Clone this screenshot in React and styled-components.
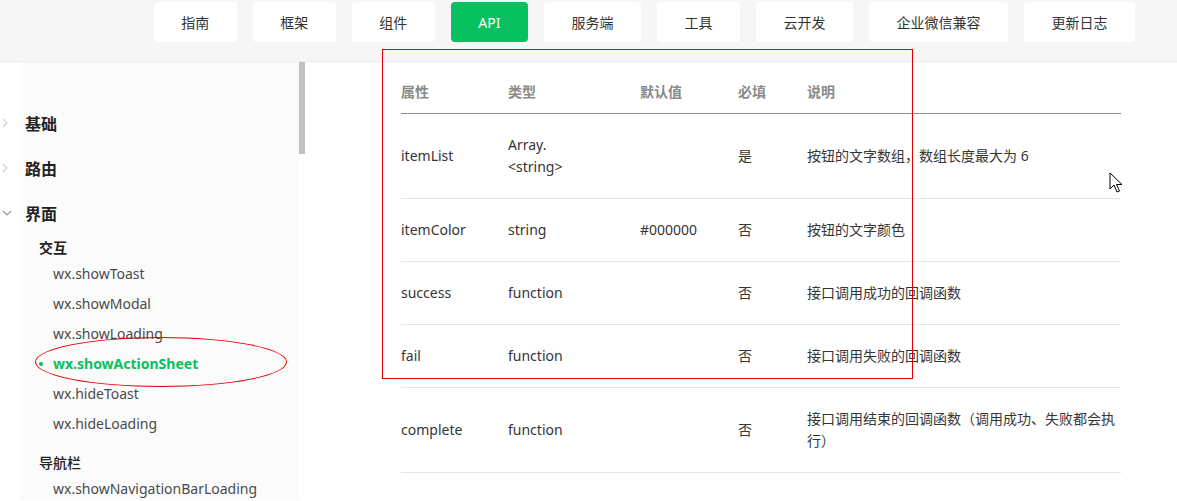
import styled, { createGlobalStyle } from "styled-components";

const GlobalStyle = createGlobalStyle`
  html, body {
    margin: 0;
    padding: 0;
    background: #fff;
    font-family: "Noto Sans", "Noto Sans CJK SC", sans-serif;
  }
`;

const tabs = ["指南", "框架", "组件", "API", "服务端", "工具", "云开发", "企业微信兼容", "更新日志"];

const groups = [
  { name: "基础", open: false },
  { name: "路由", open: false },
  { name: "界面", open: true },
];

const interactions = [
  "wx.showToast",
  "wx.showModal",
  "wx.showLoading",
  "wx.showActionSheet",
  "wx.hideToast",
  "wx.hideLoading",
];

const rows = [
  { name: "itemList", type: ["Array.", "<string>"], def: "", req: "是", desc: "按钮的文字数组，数组长度最大为 6" },
  { name: "itemColor", type: ["string"], def: "#000000", req: "否", desc: "按钮的文字颜色" },
  { name: "success", type: ["function"], def: "", req: "否", desc: "接口调用成功的回调函数" },
  { name: "fail", type: ["function"], def: "", req: "否", desc: "接口调用失败的回调函数" },
  { name: "complete", type: ["function"], def: "", req: "否", desc: "接口调用结束的回调函数（调用成功、失败都会执行）" },
];

function Chevron({ open }) {
  if (open) {
    return (
      <svg width="10" height="6" viewBox="0 0 10 6">
        <path d="M1 1 L5 5 L9 1" fill="none" stroke="#9a9a9a" strokeWidth="1.2" />
      </svg>
    );
  }
  return (
    <svg width="6" height="10" viewBox="0 0 6 10">
      <path d="M1 1 L5 5 L1 9" fill="none" stroke="#cfcfcf" strokeWidth="1.2" />
    </svg>
  );
}

export default function App() {
  return (
    <Page>
      <GlobalStyle />
      <Header>
        {tabs.map((t) => (
          <Tab key={t} $active={t === "API"}>
            {t}
          </Tab>
        ))}
      </Header>
      <Body>
        <Sidebar>
          <Nav>
            {groups.map((g) => (
              <Group key={g.name}>
                <Arrow>
                  <Chevron open={g.open} />
                </Arrow>
                {g.name}
              </Group>
            ))}
            <SubTitle $bold>交互</SubTitle>
            {interactions.map((item) => (
              <Item key={item} $active={item === "wx.showActionSheet"}>
                {item}
              </Item>
            ))}
            <SubTitle $gap>导航栏</SubTitle>
            <Item>wx.showNavigationBarLoading</Item>
          </Nav>
          <ScrollTrack>
            <Thumb />
          </ScrollTrack>
        </Sidebar>
        <Main>
          <Table>
            <colgroup>
              <col style={{ width: 107 }} />
              <col style={{ width: 132 }} />
              <col style={{ width: 98 }} />
              <col style={{ width: 69 }} />
              <col style={{ width: 314 }} />
            </colgroup>
            <thead>
              <tr>
                <Th>属性</Th>
                <Th>类型</Th>
                <Th>默认值</Th>
                <Th>必填</Th>
                <Th>说明</Th>
              </tr>
            </thead>
            <tbody>
              {rows.map((r) => (
                <tr key={r.name}>
                  <Td>{r.name}</Td>
                  <Td>
                    {r.type.map((line) => (
                      <div key={line}>{line}</div>
                    ))}
                  </Td>
                  <Td>{r.def}</Td>
                  <Td>{r.req}</Td>
                  <Td>{r.desc}</Td>
                </tr>
              ))}
            </tbody>
          </Table>
        </Main>
      </Body>
      <MarkBox />
      <MarkEllipse />
      <Cursor width="14" height="22" viewBox="0 0 14 22">
        <path
          d="M1 1 L1 17 L5 13 L8 20 L10.5 19 L7.5 12.5 L13 12.5 Z"
          fill="#fff"
          stroke="#000"
          strokeWidth="1"
          strokeLinejoin="round"
        />
      </Cursor>
    </Page>
  );
}

const Page = styled.div`
  position: relative;
  width: 1177px;
  height: 501px;
  overflow: hidden;
  background: #fff;
`;

const Header = styled.div`
  display: flex;
  justify-content: flex-end;
  gap: 16px;
  height: 62px;
  padding: 2px 42px 0 0;
  box-sizing: border-box;
  background: #f6f6f6;
  border-bottom: 1px solid #ececec;
`;

const Tab = styled.div`
  height: 40px;
  padding: 0 27.5px;
  display: flex;
  align-items: center;
  border-radius: 4px;
  font-size: 14px;
  color: ${(p) => (p.$active ? "#fff" : "#333")};
  background: ${(p) => (p.$active ? "#07c160" : "#fff")};
`;

const Body = styled.div`
  display: flex;
  height: 438px;
`;

const Sidebar = styled.div`
  display: flex;
  width: 306px;
  flex-shrink: 0;
`;

const Nav = styled.div`
  width: 299px;
  padding-top: 38px;
  background: linear-gradient(to right, #fff 20px, #fbfbfb 20px);
`;

const Group = styled.div`
  display: flex;
  align-items: center;
  height: 45px;
  font-size: 16px;
  font-weight: 700;
  color: #222;
`;

const Arrow = styled.span`
  display: flex;
  align-items: center;
  width: 25px;
  padding-left: 2px;
  box-sizing: border-box;
`;

const SubTitle = styled.div`
  height: 22px;
  line-height: 22px;
  padding-left: 39px;
  margin-top: ${(p) => (p.$gap ? "13px" : "2px")};
  font-size: 14px;
  font-weight: ${(p) => (p.$bold ? 700 : 500)};
  color: #222;
`;

const Item = styled.div`
  position: relative;
  height: 30px;
  line-height: 30px;
  padding-left: 53px;
  font-size: 14px;
  white-space: nowrap;
  color: ${(p) => (p.$active ? "#07c160" : "#4a4a4a")};
  font-weight: ${(p) => (p.$active ? 700 : 400)};

  &::before {
    content: "";
    display: ${(p) => (p.$active ? "block" : "none")};
    position: absolute;
    left: 39px;
    top: 13px;
    width: 4px;
    height: 4px;
    border-radius: 50%;
    background: #07c160;
  }
`;

const ScrollTrack = styled.div`
  width: 7px;
  background: #fff;
`;

const Thumb = styled.div`
  width: 6px;
  height: 92px;
  background: #c1c1c1;
`;

const Main = styled.div`
  flex: 1;
  padding: 9px 0 0 95px;
`;

const Table = styled.table`
  width: 720px;
  table-layout: fixed;
  border-collapse: collapse;
  font-size: 14px;
`;

const Th = styled.th`
  text-align: left;
  padding: 10px 0;
  line-height: 22px;
  font-weight: 700;
  color: #8a8a8a;
  border-bottom: 1px solid #8c8c8c;
`;

const Td = styled.td`
  padding: 20px 0;
  line-height: 22px;
  color: #353535;
  vertical-align: middle;
  border-bottom: 1px solid #e5e5e5;
`;

const MarkBox = styled.div`
  position: absolute;
  left: 382px;
  top: 49px;
  width: 531px;
  height: 330px;
  box-sizing: border-box;
  border: 1px solid #e00000;
  pointer-events: none;
`;

const MarkEllipse = styled.div`
  position: absolute;
  left: 35px;
  top: 337px;
  width: 252px;
  height: 50px;
  box-sizing: border-box;
  border: 1px solid #e00000;
  border-radius: 50%;
  pointer-events: none;
`;

const Cursor = styled.svg`
  position: absolute;
  left: 1109px;
  top: 172px;
`;
